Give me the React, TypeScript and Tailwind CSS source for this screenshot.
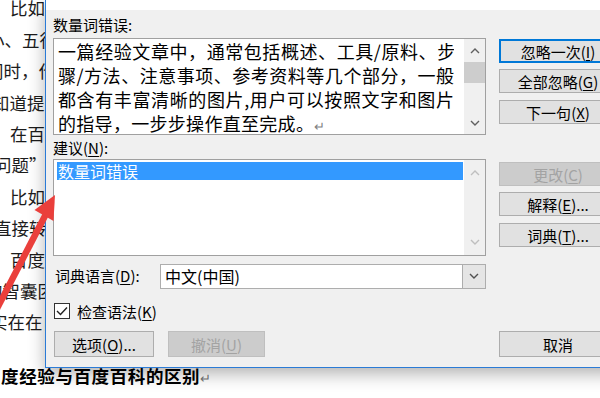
import React from 'react';

const cjk = "font-['Noto_Sans_CJK_SC','Noto_Sans_CJK_JP',sans-serif]";

const docLines = [
  { cls: 'ml-[10px]', text: '比如百度经验的内容简介以及步骤说明' },
  { cls: '-ml-[13px]', text: '小、五行文字就可以完成一篇经验' },
  { cls: '-ml-[14px]', text: '同时，作者可以在经验中插入图片' },
  { cls: '-ml-[8px]', text: '知道提问的内容与回答都比较简单' },
  { cls: 'ml-[10px]', text: '在百度知道里面用户可以提出问题' },
  { cls: '-ml-[6px]', text: '问题”并不需要很长的篇幅就能说清' },
  { cls: 'ml-[10px]', text: '比如一个生活中的小问题' },
  { cls: '-ml-[6px]', text: '直接转载别人的答案也是可以的' },
  { cls: 'ml-[10px]', text: '百度知道相当于一个大家的' },
  { cls: '-ml-[15px]', text: '的智囊团，大家互相帮助' },
  { cls: '-ml-[10px]', text: '实在在自己动手去做的经验' },
];

const Key = ({ k }: { k: string }) => (
  <>
    (<span className="underline underline-offset-2">{k}</span>)
  </>
);

const ChevronUp = ({ color }: { color: string }) => (
  <svg width="10" height="7" viewBox="0 0 10 7">
    <polyline points="1,6 5,2 9,6" fill="none" stroke={color} strokeWidth="1.4" />
  </svg>
);

const ChevronDown = ({ color }: { color: string }) => (
  <svg width="10" height="7" viewBox="0 0 10 7">
    <polyline points="1,1 5,5 9,1" fill="none" stroke={color} strokeWidth="1.4" />
  </svg>
);

const Btn: React.FC<{ className?: string; disabled?: boolean; children: React.ReactNode }> = ({
  className = '',
  disabled,
  children,
}) => (
  <div
    className={`flex items-center justify-center border text-[15px] leading-none whitespace-nowrap ${
      disabled ? 'bg-[#cccccc] border-[#bfbfbf] text-[#a3a3a3]' : 'bg-[#e1e1e1] border-[#adadad] text-black'
    } ${className}`}
  >
    {children}
  </div>
);

const App: React.FC = () => {
  return (
    <div className={`relative w-[600px] h-[398px] overflow-hidden bg-white ${cjk}`}>
      {/* document behind the dialog */}
      <div className="text-[17.5px] text-[#1c1c1c] whitespace-nowrap">
        <div className="-mt-[7.7px] leading-[31.4px]">
          {docLines.map((l, i) => (
            <div key={i} className={l.cls}>
              {l.text}
            </div>
          ))}
        </div>
        <div className="mt-[21.8px] -ml-[17px] leading-[31px] font-bold tracking-[0.6px] text-black">
          百度经验与百度百科的区别<span className="font-normal text-[13px] text-[#777]">↵</span>
        </div>
      </div>

      {/* spelling & grammar dialog */}
      <div className="absolute left-[45px] top-0 w-[600px] h-[368px] bg-[#f0f0f0] border-l border-b border-[#2b7bd6] shadow-[0_6px_16px_rgba(0,0,0,0.3)] flex flex-col text-black">
        <div className="h-[10px] bg-white" />
        <div className="flex pl-[7px] gap-[13px]">
          {/* left column */}
          <div className="w-[433px] flex flex-col">
            <div className="h-[28px] pt-[5px] text-[15px] leading-[20px]">数量词错误:</div>
            <div className="h-[97px] border border-[#a0a0a0] bg-white flex">
              <div className="flex-1 min-w-0 pl-[4px] text-[18px] leading-[24px] overflow-hidden">
                <div className="w-[396px] h-[24px] overflow-hidden tracking-[-1.2px] text-justify [text-align-last:justify]">一篇经验文章中，通常包括概述、工具/原料、步</div>
                <div className="w-[396px] h-[24px] overflow-hidden text-justify [text-align-last:justify]">骤/方法、注意事项、参考资料等几个部分，一般</div>
                <div className="w-[396px] h-[24px] overflow-hidden text-justify [text-align-last:justify]">都含有丰富清晰的图片,用户可以按照文字和图片</div>
                <div className="tracking-[0.3px] whitespace-nowrap">
                  的指导，一步步操作直至完成。
                  <span className="text-[13px] text-[#808080]">↵</span>
                </div>
              </div>
              <div className="w-[21px] shrink-0 bg-[#f0f0f0] flex flex-col">
                <div className="h-[22px] flex items-center justify-center">
                  <ChevronUp color="#606060" />
                </div>
                <div className="mt-[1px] h-[21px] bg-[#cdcdcd]" />
                <div className="flex-1" />
                <div className="h-[22px] flex items-center justify-center">
                  <ChevronDown color="#606060" />
                </div>
              </div>
            </div>

            <div className="h-[24px] pt-[3px] text-[15px] leading-[20px]">
              建议<Key k="N" />:
            </div>
            <div className="h-[97px] border border-[#a0a0a0] bg-white flex">
              <div className="flex-1 pl-[3px] pr-[1px] pt-[2px]">
                <div className="h-[18px] bg-[#3399ff] text-white text-[16px] leading-[18px] pl-[1px]">数量词错误</div>
              </div>
              <div className="w-[21px] bg-[#f0f0f0] flex flex-col">
                <div className="h-[25px] flex items-center justify-center">
                  <ChevronUp color="#bfbfbf" />
                </div>
                <div className="flex-1" />
                <div className="h-[25px] flex items-center justify-center">
                  <ChevronDown color="#bfbfbf" />
                </div>
              </div>
            </div>

            <div className="mt-[8px] h-[25px] flex items-center">
              <div className="w-[107px] pl-[2px] text-[15px]">
                词典语言<Key k="D" />:
              </div>
              <div className="flex-1 h-full border border-[#adadad] bg-white flex">
                <div className="flex-1 pl-[4px] text-[16px] leading-[23px]">中文(中国)</div>
                <div className="w-[23px] bg-[#e5e5e5] border-l border-[#adadad] flex items-center justify-center">
                  <ChevronDown color="#505050" />
                </div>
              </div>
            </div>

            <div className="mt-[14px] h-[16px] flex items-center gap-[7px]">
              <div className="ml-[1px] w-[16px] h-[16px] border border-[#333] bg-white flex items-center justify-center">
                <svg width="12" height="10" viewBox="0 0 12 10">
                  <polyline points="1,5 4.5,8.5 11,1.5" fill="none" stroke="#222" strokeWidth="1.4" />
                </svg>
              </div>
              <div className="text-[15px] leading-none">
                检查语法<Key k="K" />
              </div>
            </div>

            <div className="mt-[12px] flex gap-[14px]">
              <Btn className="ml-[1px] w-[100px] h-[26px]">
                选项<Key k="O" />...
              </Btn>
              <Btn disabled className="w-[97px] h-[26px]">
                撤消<Key k="U" />
              </Btn>
            </div>
          </div>

          {/* right column */}
          <div className="w-[118px] flex flex-col">
            <Btn className="mt-[29px] h-[24px] !border-[#0078d7] shadow-[inset_0_0_0_1px_#0078d7]">
              忽略一次<Key k="I" />
            </Btn>
            <Btn className="mt-[6px] h-[24px]">
              全部忽略<Key k="G" />
            </Btn>
            <Btn className="mt-[7px] h-[24px]">
              下一句<Key k="X" />
            </Btn>
            <Btn disabled className="mt-[38px] h-[24px]">
              更改<Key k="C" />
            </Btn>
            <Btn className="mt-[6px] h-[24px]">
              解释<Key k="E" />...
            </Btn>
            <Btn className="mt-[7px] h-[24px]">
              词典<Key k="T" />...
            </Btn>
            <Btn className="mt-[84px] h-[26px]">取消</Btn>
          </div>
        </div>
      </div>

      {/* red annotation arrow */}
      <svg className="absolute left-0 top-0 pointer-events-none" width="600" height="398" viewBox="0 0 600 398">
        <line x1="-10" y1="322" x2="46" y2="214" stroke="#ea3f3b" strokeWidth="6.5" />
        <polygon points="55,195 53.5,221 34.5,210" fill="#ea3f3b" />
      </svg>
    </div>
  );
};

export default App;
